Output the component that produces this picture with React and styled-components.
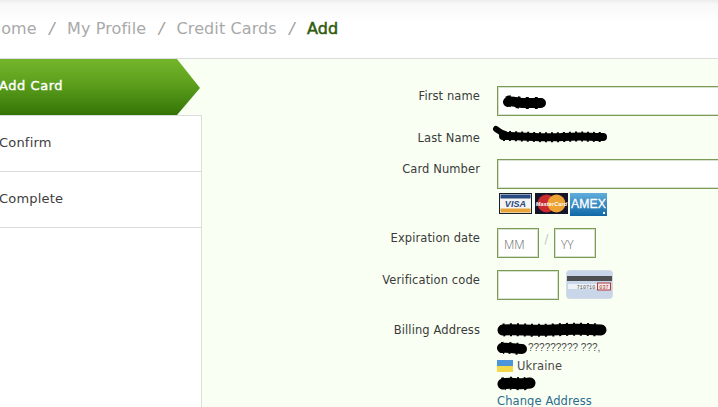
import React from "react";
import styled, { createGlobalStyle } from "styled-components";

const Global = createGlobalStyle`
  html, body { margin: 0; padding: 0; width: 718px; height: 407px; overflow: hidden; background: #f9fff3; }
  body { font-family: "DejaVu Sans", "Liberation Sans", sans-serif; }
  * { box-sizing: border-box; }
`;

const Page = styled.div`
  display: flex;
  flex-direction: column;
  width: 718px;
  height: 407px;
  overflow: hidden;
`;

const Header = styled.header`
  flex: none;
  height: 59px;
  width: 740px;
  display: flex;
  align-items: center;
  gap: 12.5px;
  padding-bottom: 2px;
  margin-left: -11px;
  background: linear-gradient(#ececec 0, #f8f8f8 4px, #ffffff 22px);
  border-bottom: 1px solid #dcdcdc;
  font-size: 16px;
  color: #a9a9a9;
`;

const Crumb = styled.span`
  color: ${(p) => (p.$current ? "#2f5a0e" : "#a9a9a9")};
  -webkit-text-stroke: ${(p) => (p.$current ? "0.5px #2f5a0e" : "0")};
  letter-spacing: ${(p) => (p.$current ? "0" : "0.1px")};
`;

const Slash = styled.span`
  color: #9a9a9a;
  font-style: italic;
`;

const Main = styled.div`
  flex: 1;
  display: flex;
  min-height: 0;
`;

const Sidebar = styled.nav`
  flex: none;
  width: 202px;
  display: flex;
  flex-direction: column;
`;

const ActiveStep = styled.div`
  height: 56px;
  width: 200px;
  flex: none;
  display: flex;
  align-items: center;
  padding-bottom: 4px;
  clip-path: polygon(0 0, 177px 0, 200px 29px, 177px 56px, 0 56px);
  background: linear-gradient(#74b52b, #5c9f1c 45%, #347407);
  color: #fff;
  -webkit-text-stroke: 0.4px #fff;
  font-size: 13px;
  letter-spacing: 0.55px;
  text-indent: -1px;
`;

const StepList = styled.div`
  flex: 1;
  background: #fff;
  border-right: 1px solid #d9e0d4;
  border-top: 1px solid #dcdcdc;
`;

const Step = styled.div`
  height: 56px;
  display: flex;
  align-items: center;
  border-bottom: 1px solid #dcdcdc;
  color: #3d3d3d;
  font-size: 13px;
  letter-spacing: 0.2px;
  text-indent: -1px;
  padding-bottom: 2px;
`;

const Form = styled.form`
  flex: 1;
  min-width: 0;
  padding-top: 27px;
  display: flex;
  flex-direction: column;
  font-size: 11.5px;
  letter-spacing: 0.1px;
  color: #3b3b3b;
`;

const Row = styled.div`
  display: flex;
  gap: 17px;
  margin-bottom: ${(p) => p.$after || 12}px;
`;

const Label = styled.label`
  flex: none;
  width: 278px;
  line-height: 18px;
  padding-top: 1px;
  text-align: right;
`;

const Field = styled.div`
  position: relative;
  display: flex;
  flex-direction: column;
  align-items: flex-start;
  min-width: 0;
`;

const Inline = styled.div`
  display: flex;
  align-items: flex-start;
`;

const Input = styled.input`
  display: block;
  width: ${(p) => p.$w}px;
  height: 30px;
  padding: 2px 6px 0;
  border: 1px solid #7a9a56;
  box-shadow: inset 0 0 0 1px rgba(125, 156, 91, 0.3);
  background: #fff;
  outline: none;
  font-family: "Open Sans", sans-serif;
  font-size: 12px;
  font-weight: 300;
  color: #666;
  &::placeholder { color: #666; opacity: 1; }
`;

const Sep = styled.span`
  width: 15px;
  text-align: center;
  color: #c3c3c3;
  line-height: 18px;
  padding-top: 2px;
`;

const Cards = styled.div`
  display: flex;
  align-items: flex-start;
  gap: 3px;
  margin: 4px 0 0 2px;
`;

const Address = styled.div`
  display: flex;
  flex-direction: column;
  color: #4a4a4a;
`;

const AddressLine = styled.div`
  display: flex;
  align-items: center;
  height: 18px;
  padding-top: ${(p) => p.$drop || 0}px;
  white-space: nowrap;
`;

const Question = styled.span`
  font-family: "Liberation Sans", sans-serif;
  font-size: 10px;
  letter-spacing: 0;
  margin-left: 1px;
`;

const Country = styled.span`
  margin-left: 4px;
`;

const Link = styled.a`
  color: #2b6d8d;
  text-decoration: none;
`;

const Overlay = styled.svg`
  position: absolute;
  left: ${(p) => p.$x}px;
  top: ${(p) => p.$y}px;
  overflow: visible;
`;

const Drawing = styled.svg`
  display: block;
  flex: none;
  overflow: visible;
  margin-left: ${(p) => p.$ml || 0}px;
`;

const Ink = ({ d, w = 11 }) => (
  <>
    <path d={d} fill="none" stroke="#000" strokeWidth={w} strokeLinecap="round" strokeLinejoin="round" />
    <path d={d} fill="none" stroke="#000" strokeWidth={w + 2} strokeDasharray="2 5" />
  </>
);

const Blot = ({ w, d, sw }) => (
  <Drawing width={w} height="14" viewBox={`0 0 ${w} 14`}>
    <Ink d={d} w={sw} />
  </Drawing>
);

const Visa = () => (
  <Drawing width="33" height="21" viewBox="0 0 33 21">
    <rect width="33" height="21" fill="#17202e" />
    <rect x="1" y="1" width="31" height="19" fill="#f4f4f2" />
    <rect x="1.5" y="1.5" width="30" height="4" fill="#27497f" />
    <rect x="1.5" y="15.5" width="30" height="4" fill="#e8a33a" />
    <text x="16.5" y="14" textAnchor="middle" fontFamily="Liberation Sans" fontSize="9" fontWeight="700" fontStyle="italic" fill="#27497f">VISA</text>
  </Drawing>
);

const Master = () => (
  <Drawing width="33" height="21" viewBox="0 0 33 21">
    <rect width="33" height="21" fill="#15152a" />
    <circle cx="11.5" cy="10.5" r="9" fill="#c92a30" />
    <circle cx="21.5" cy="10.5" r="9" fill="#eda332" />
    <text x="16.5" y="12.5" textAnchor="middle" fontFamily="Liberation Sans" fontSize="5.5" fontWeight="700" fontStyle="italic" fill="#fff">MasterCard</text>
  </Drawing>
);

const Amex = () => (
  <Drawing width="37" height="23" viewBox="0 0 37 23" $ml={-1}>
    <defs>
      <linearGradient id="amexBg" x1="0" y1="0" x2="0" y2="1">
        <stop offset="0" stopColor="#62aedd" />
        <stop offset="1" stopColor="#0f68a6" />
      </linearGradient>
    </defs>
    <rect width="37" height="23" fill="url(#amexBg)" />
    <text x="18.5" y="15" textAnchor="middle" fontFamily="Liberation Sans" fontSize="12" fontWeight="400" stroke="#fff" strokeWidth="0.3" fill="#fff" textLength="35" lengthAdjust="spacingAndGlyphs">AMEX</text>
    <rect x="33" y="19" width="2" height="2" fill="#fff" />
  </Drawing>
);

const CvvCard = () => (
  <Drawing width="47" height="29" viewBox="0 0 47 29" $ml={7}>
    <rect x="0.5" y="0.5" width="46" height="28" rx="3" fill="#c9d6ea" stroke="#d4dce2" />
    <rect x="1" y="6" width="45" height="5" fill="#4d4f50" />
    <rect x="2" y="14" width="43" height="5" fill="#edf2f8" />
    <text x="20" y="18.5" textAnchor="middle" fontFamily="Liberation Mono" fontSize="5" fill="#555">710710</text>
    <rect x="31.5" y="13" width="13" height="7" fill="#f3e9e6" stroke="#b03a3a" />
    <text x="38" y="18.5" textAnchor="middle" fontFamily="Liberation Mono" fontSize="5" fill="#a33">037</text>
  </Drawing>
);

const Flag = () => (
  <Drawing width="16" height="12" viewBox="0 0 16 12">
    <rect width="16" height="6" fill="#4c95d8" />
    <rect y="6" width="16" height="6" fill="#f3d94a" />
  </Drawing>
);

export default function App() {
  return (
    <Page>
      <Global />
      <Header>
        <Crumb>Home</Crumb>
        <Slash>/</Slash>
        <Crumb>My Profile</Crumb>
        <Slash>/</Slash>
        <Crumb>Credit Cards</Crumb>
        <Slash>/</Slash>
        <Crumb $current>Add</Crumb>
      </Header>
      <Main>
        <Sidebar>
          <ActiveStep>Add Card</ActiveStep>
          <StepList>
            <Step>Confirm</Step>
            <Step>Complete</Step>
          </StepList>
        </Sidebar>
        <Form>
          <Row>
            <Label>First name</Label>
            <Field>
              <Input $w={240} />
              <Overlay $x={6} $y={9} width="44" height="15" viewBox="0 0 44 15">
                <path d="M5 7 C9 5 14 8 20 8 S32 8 38 8" fill="none" stroke="#000" strokeWidth="10" strokeLinecap="round" />
                <path d="M5 7 C9 5 14 8 20 8 S32 8 38 8" fill="none" stroke="#000" strokeWidth="12" strokeDasharray="3 6" />
              </Overlay>
            </Field>
          </Row>
          <Row>
            <Label>Last Name</Label>
            <Field>
              <Overlay $x={-4} $y={-1} width="116" height="19" viewBox="0 0 116 19">
                <path d="M3 2 C6 4 8 6 12 7" fill="none" stroke="#000" strokeWidth="6" strokeLinecap="round" />
                <path d="M10 9 C30 9 50 11 70 10 S95 10 110 10" fill="none" stroke="#000" strokeWidth="8" strokeLinecap="round" />
                <path d="M10 9 C30 9 50 11 70 10 S95 10 110 10" fill="none" stroke="#000" strokeWidth="10" strokeDasharray="2 4" />
              </Overlay>
            </Field>
          </Row>
          <Row>
            <Label>Card Number</Label>
            <Field>
              <Input $w={240} />
              <Cards>
                <Visa />
                <Master />
                <Amex />
              </Cards>
            </Field>
          </Row>
          <Row>
            <Label>Expiration date</Label>
            <Field>
              <Inline>
                <Input $w={42} placeholder="MM" />
                <Sep>/</Sep>
                <Input $w={42} placeholder="YY" />
              </Inline>
            </Field>
          </Row>
          <Row $after={20}>
            <Label>Verification code</Label>
            <Field>
              <Inline>
                <Input $w={62} />
                <CvvCard />
              </Inline>
            </Field>
          </Row>
          <Row>
            <Label>Billing Address</Label>
            <Field>
              <Address>
                <AddressLine>
                  <Blot w={110} sw={11} d="M6 8 C20 7 35 9 55 8 S85 7 104 8" />
                </AddressLine>
                <AddressLine $drop={1}>
                  <Blot w={30} sw={10} d="M5 7 C10 6 18 8 25 8" />
                  <Question>?????????&nbsp;???,</Question>
                </AddressLine>
                <AddressLine $drop={1}>
                  <Flag />
                  <Country>Ukraine</Country>
                </AddressLine>
                <AddressLine>
                  <Blot w={39} sw={11} d="M6 8 C12 6 22 9 33 7" />
                </AddressLine>
                <AddressLine>
                  <Link href="#">Change Address</Link>
                </AddressLine>
              </Address>
            </Field>
          </Row>
        </Form>
      </Main>
    </Page>
  );
}
